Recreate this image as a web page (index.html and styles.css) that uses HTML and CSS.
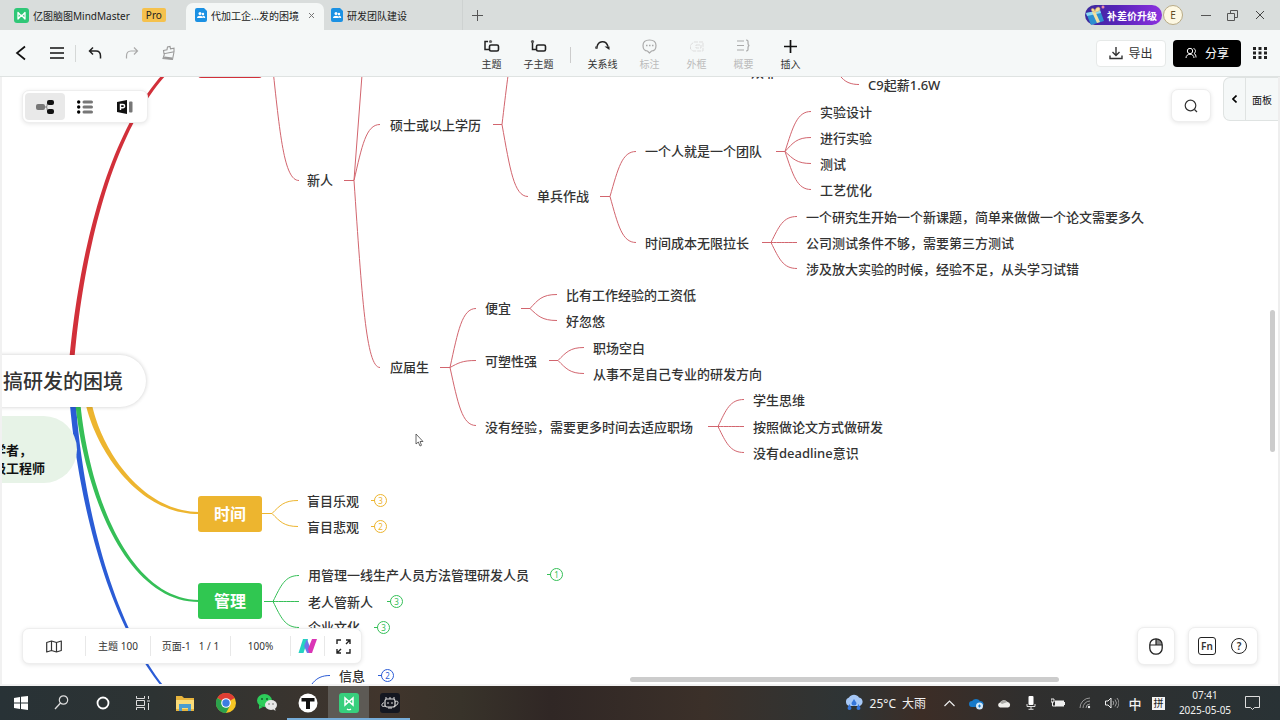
FILE: index.html
```html
<!DOCTYPE html>
<html lang="zh-CN">
<head>
    <meta charset="UTF-8">
    <meta name="viewport" content="width=device-width, initial-scale=1.0">
    <title>亿图脑图MindMaster</title>
    <link rel="stylesheet" href="styles.css">
</head>
<body>
    <header class="tabbar">
        <div class="brand">
            <svg width="15" height="15" viewBox="0 0 15 15"><rect width="15" height="15" rx="3" fill="#2fc777"/><path d="M4 11V4.5l3.5 3.7L11 4.500V11L7.500 7.300z" fill="none" stroke="#fff" stroke-width="1.300" stroke-linejoin="round"/></svg>
            <span>亿图脑图MindMaster</span>
            <span class="pro">Pro</span>
        </div>
        <div class="tab active">
            <svg width="12" height="14" viewBox="0 0 12 14"><path d="M2 0h7l3 3v9a2 2 0 0 1-2 2H2a2 2 0 0 1-2-2V2a2 2 0 0 1 2-2z" fill="#1b91e3"/><circle cx="5" cy="5.500" r="1.500" fill="#fff"/><circle cx="8" cy="6" r="1.200" fill="#fff"/><path d="M2 10c0-3 6-3 6 0zM7.500 8c1.500-.5 2.700.5 2.700 2H8.500z" fill="#fff"/></svg>
            <span>代加工企...发的困境</span>
            <button class="close" aria-label="关闭标签"><svg width="7" height="7" viewBox="0 0 7 7"><path d="M1 1l5 5M6 1L1 6" stroke="#777" stroke-width="1"/></svg></button>
        </div>
        <div class="tab">
            <svg width="12" height="14" viewBox="0 0 12 14"><path d="M2 0h7l3 3v9a2 2 0 0 1-2 2H2a2 2 0 0 1-2-2V2a2 2 0 0 1 2-2z" fill="#1b91e3"/><circle cx="5" cy="5.500" r="1.500" fill="#fff"/><circle cx="8" cy="6" r="1.200" fill="#fff"/><path d="M2 10c0-3 6-3 6 0zM7.500 8c1.500-.5 2.700.5 2.700 2H8.500z" fill="#fff"/></svg>
            <span>研发团队建设</span>
        </div>
        <button class="new-tab" aria-label="新建"><svg width="11" height="11" viewBox="0 0 11 11"><path d="M5.500 0v11M0 5.500h11" stroke="#555"/></svg></button>
        <div class="window-side">
            <button class="upgrade">
                <svg width="22" height="20" viewBox="0 0 22 20"><path d="M1 8L15 5l4 11-13 4z" fill="#2e8fd0"/><path d="M1 8l14-3 1 3L2 11z" fill="#8ed8f2"/><path d="M7 7l5 11 3-1-5-11z" fill="#f2dfa3"/><path d="M9 7C5 6 6 2 9 4l1 2c0-4 5-5 5-2 0 2-3 3-6 3z" fill="#f6dd9b" stroke="#d3a85d" stroke-width=".5"/><circle cx="18" cy="2" r="1.500" fill="#e98aa7"/></svg>
                <span>补差价升级</span>
            </button>
            <button class="avatar">E</button>
            <button class="win-btn" aria-label="最小化"><svg width="10" height="10" viewBox="0 0 10 10"><path d="M0 5.500h10" stroke="#555"/></svg></button>
            <button class="win-btn" aria-label="还原"><svg width="11" height="11" viewBox="0 0 11 11"><path d="M.5 3.500h7v7h-7zM3.500 3V.500h7v7H8" fill="none" stroke="#555"/></svg></button>
            <button class="win-btn" aria-label="关闭"><svg width="10" height="10" viewBox="0 0 10 10"><path d="M1 1l8 8M9 1L1 9" stroke="#444"/></svg></button>
        </div>
    </header>

    <nav class="toolbar">
        <div class="tools-left">
            <button class="icon-btn" aria-label="返回"><svg width="12" height="16" viewBox="0 0 12 16"><path d="M10 1.500L2 8l8 6.500" fill="none" stroke="#111" stroke-width="1.700"/></svg></button>
            <button class="icon-btn menu-btn" aria-label="菜单"><svg width="14" height="14" viewBox="0 0 14 14"><path d="M0 2h14M0 7h14M0 12h14" stroke="#111" stroke-width="1.600"/></svg></button>
            <button class="icon-btn" aria-label="撤销"><svg width="14" height="14" viewBox="0 0 14 14"><path d="M5 1.500L1.500 5 5 8.500M2 5h6c3 0 4.500 2 4.500 5v2.500" fill="none" stroke="#222" stroke-width="1.500"/></svg></button>
            <button class="icon-btn" aria-label="重做" disabled><svg width="14" height="14" viewBox="0 0 14 14"><path d="M9 1.500L12.500 5 9 8.500M12 5H6c-3 0-4.500 2-4.500 5v2.500" fill="none" stroke="#aaa" stroke-width="1.200"/></svg></button>
            <button class="icon-btn" aria-label="格式刷" disabled><svg width="15" height="16" viewBox="0 0 15 16"><path d="M2.500 5.500l3.500-.8L6.500 2l2.500-.6.500 2.500 3.500-.7v3.500L3 8.700zM3.500 9L2 13.500l9.500 1L13 7" fill="none" stroke="#999" stroke-width="1.100"/><path d="M3.500 11.500l8 1-.5 2-8.500-1z" fill="#999"/></svg></button>
        </div>
        <div class="tools-center">
            <button class="tool"><svg width="17" height="16" viewBox="0 0 17 16"><path d="M5 3.500H2v8h4" fill="none" stroke="#222" stroke-width="1.500"/><rect x="6.500" y="7" width="9" height="6" rx="1.500" fill="none" stroke="#222" stroke-width="1.600"/><circle cx="7.500" cy="3.500" r="1.600" fill="#666"/></svg>主题</button>
            <button class="tool"><svg width="17" height="16" viewBox="0 0 17 16"><path d="M2.500 4v7.500H6" fill="none" stroke="#222" stroke-width="1.500"/><rect x="6.500" y="7" width="9" height="6" rx="1.500" fill="none" stroke="#222" stroke-width="1.600"/><circle cx="2.500" cy="3.500" r="1.600" fill="#555"/></svg>子主题</button>
            <span class="separator"></span>
            <button class="tool"><svg width="17" height="16" viewBox="0 0 17 16"><path d="M3 9C4 2.500 12 1.500 14 8.500" fill="none" stroke="#222" stroke-width="1.500"/><path d="M10.500 8.500h5V12z" fill="#222"/><circle cx="2.500" cy="9.500" r="1.500" fill="#555"/></svg>关系线</button>
            <button class="tool" disabled><svg width="17" height="16" viewBox="0 0 17 16"><path d="M8.500 15l-2-2C3.500 13 2 10.500 2 7.500 2 4 4.500 2 8.500 2S15 4 15 7.500c0 3-1.500 5.500-4.500 5.500z" fill="none" stroke="#aaa" stroke-width="1.200"/><path d="M5 7.500h1.500M8 7.500h1.500M11 7.500h1.500" stroke="#aaa" stroke-width="1.300"/></svg>标注</button>
            <button class="tool" disabled><svg width="17" height="16" viewBox="0 0 17 16"><path d="M15 4H6L2.500 7v4L5 13h10zM8 7h5v3H8z" fill="none" stroke="#ddd" stroke-dasharray="4 1"/></svg>外框</button>
            <button class="tool" disabled><svg width="17" height="16" viewBox="0 0 17 16"><path d="M2 3h7M2 7.500h7M2 12h7M11 2c2.500 0 2 1.500 2 3s.5 2.500 1.500 2.500C13.500 7.500 13 8.500 13 10s.5 3-2 3" fill="none" stroke="#aaa" stroke-width="1.200"/></svg>概要</button>
            <button class="tool"><svg width="17" height="16" viewBox="0 0 17 16"><path d="M8.500 2v13M2 8.500h13" stroke="#111" stroke-width="1.700"/></svg>插入</button>
        </div>
        <div class="tools-right">
            <button class="export"><svg width="14" height="14" viewBox="0 0 14 14"><path d="M7 1v8M3.500 6L7 9.500 10.500 6M1 9.500v3h12v-3" fill="none" stroke="#333" stroke-width="1.400"/></svg>导出</button>
            <button class="share"><svg width="12" height="12" viewBox="0 0 12 12"><circle cx="5" cy="4" r="2.700" fill="none" stroke="#fff"/><path d="M1 11c0-5 8-5 8 0M8.500 1.500c2.500.5 2.500 4 .5 5 1.500.5 2 2 2 4" fill="none" stroke="#fff"/></svg>分享</button>
            <button class="icon-btn" aria-label="应用"><svg width="14" height="12" viewBox="0 0 14 12"><path d="M0 1.500h14M0 6h14M0 10.500h14" stroke="#222" stroke-width="3" stroke-dasharray="3 2.500"/></svg></button>
        </div>
    </nav>

    <main class="workspace">
        <div class="canvas" id="canvas">
            <svg class="links" id="links"></svg>
        </div>

        <div class="view-switch">
            <button class="view selected" aria-label="导图视图"><svg width="18" height="16" viewBox="0 0 18 16"><path d="M8 8h2c2 0 0-4.500 3-4.500M10 8c2 0 0 4.500 3 4.500" fill="none" stroke="#777"/><rect x="0" y="5" width="9" height="6" rx="2" fill="#777"/><rect x="11" y="1" width="7" height="5" rx="2" fill="#111"/><rect x="11" y="10" width="7" height="5" rx="2" fill="#111"/></svg></button>
            <button class="view" aria-label="大纲视图"><svg width="16" height="14" viewBox="0 0 16 14"><circle cx="1.700" cy="2" r="1.700"/><circle cx="1.700" cy="7" r="1.700"/><circle cx="1.700" cy="12" r="1.700"/><path d="M7 2h7.500M7 7h7.500M7 12h7.500" stroke="#777" stroke-width="3" stroke-linecap="round"/></svg></button>
            <button class="view" aria-label="幻灯片视图"><svg width="16" height="14" viewBox="0 0 16 14"><path d="M0 2l10-2v14L0 12z" fill="#111"/><path d="M3.500 10V4.500H6a1.500 1.500 0 0 1 0 3.200H3.500" fill="none" stroke="#fff" stroke-width="1.400"/><rect x="12" y="1.500" width="3.500" height="11" rx="1" fill="#777"/></svg></button>
        </div>

        <button class="search" aria-label="搜索"><svg width="14" height="14" viewBox="0 0 14 14"><circle cx="6.500" cy="6.500" r="5.300" fill="none" stroke="#333" stroke-width="1.200"/><path d="M10.500 10.500l2.500 2.500" stroke="#333" stroke-width="1.300"/></svg></button>
        <button class="side-panel"><span class="panel-arrow"><svg width="5" height="8" viewBox="0 0 5 8"><path d="M4.500.5L1 4l3.500 3.500" fill="none" stroke="#000" stroke-width="1.600"/></svg></span><span class="panel-label">面板</span></button>
        <div class="scroll-y"></div>
        <div class="scroll-x"></div>

        <div class="status">
            <button class="status-map" aria-label="导航"><svg width="16" height="13" viewBox="0 0 16 13"><path d="M.7 2.500L5.500 1l5 1.500L15.300 1v9.500L10.500 12l-5-1.500L.7 12zM5.500 1v9.500M10.500 2.500V12" fill="none" stroke="#333" stroke-width="1.200" stroke-linejoin="round"/></svg></button>
            <span class="status-topics">主题 100</span>
            <button class="status-page"><span>页面-1</span><span>1 / 1</span></button>
            <button class="status-zoom">100%</button>
            <button class="status-ai" aria-label="AI"><svg width="20" height="16" viewBox="0 0 20 16"><path d="M5 1h5L5.500 15h-5z" fill="#25d3c2"/><path d="M9 1l5 14H9L6 8z" fill="#6c78ea"/><path d="M14 1h5l-5 14h-3l-1-4z" fill="#da35b5"/></svg></button>
            <button class="status-full" aria-label="全屏"><svg width="15" height="15" viewBox="0 0 15 15"><path d="M1 5V1h4M10 1h4v4M14 10v4h-4M5 14H1v-4M10 5l3.500-3.500M5 10l-3.500 3.500" fill="none" stroke="#222" stroke-width="1.400"/></svg></button>
        </div>

        <div class="helpers">
            <div class="helper-box"><button aria-label="鼠标"><svg width="14" height="17" viewBox="0 0 14 17"><path d="M7 1h0a6 6 0 0 1 6 6H7z" fill="#888"/><rect x=".8" y=".8" width="12.400" height="15.400" rx="6" fill="none" stroke="#222" stroke-width="1.300"/><path d="M1 7h12M7 1v6" stroke="#222" stroke-width="1.200"/></svg></button></div>
            <div class="helper-box">
                <button class="fn"><span>Fn</span></button>
                <button aria-label="帮助"><span class="question">?</span></button>
            </div>
        </div>

        <svg class="cursor" width="9" height="14" viewBox="0 0 9 14"><path d="M1 1v10l2.300-2 1.700 4 1.500-.7L5 8.500h3z" fill="#fff" stroke="#444" stroke-width=".8"/></svg>
    </main>

    <footer class="taskbar">
        <div class="apps">
            <button aria-label="开始"><svg width="14" height="14" viewBox="0 0 14 14"><path d="M0 2l6-1v5.500H0zM7 .8L14 0v6.500H7zM0 7.500h6V13l-6-1zM7 7.500h7V14l-7-.9z" fill="#fff"/></svg></button>
            <button aria-label="搜索"><svg width="15" height="15" viewBox="0 0 15 15"><circle cx="9.500" cy="5" r="4.200" fill="none" stroke="#ddd" stroke-width="1.200"/><path d="M6.500 8L1 14" stroke="#ddd" stroke-width="1.300"/></svg></button>
            <button aria-label="Cortana"><svg width="14" height="14" viewBox="0 0 14 14"><circle cx="7" cy="7" r="5.500" fill="none" stroke="#fff" stroke-width="1.800"/></svg></button>
            <button aria-label="任务视图"><svg width="15" height="14" viewBox="0 0 15 14"><path d="M.5 0v2.500h8V0M.5 4.500h8v5h-8zM.5 14v-2.500h8V14M12.500 0v3M12.500 7v7M11 5h3" fill="none" stroke="#ddd"/></svg></button>
            <button aria-label="文件资源管理器"><svg width="20" height="16" viewBox="0 0 20 16"><path d="M1 1h6l2 2h10v13H1z" fill="#e8b53d"/><path d="M1 5h18v9H1z" fill="#fbdc79"/><path d="M4 9h12v7h-3v-3H7v3H4z" fill="#4c9dd0"/></svg></button>
            <button aria-label="Chrome"><svg width="20" height="20" viewBox="0 0 20 20"><circle cx="10" cy="10" r="10" fill="#f7c623"/><path d="M10 10L1.300 5A10 10 0 0 1 18.700 5z" fill="#df3e34"/><path d="M10 10L1.300 5A10 10 0 0 0 10 20l4-7.500z" fill="#2ba24c"/><circle cx="10" cy="10" r="4.800" fill="#fff"/><circle cx="10" cy="10" r="3.700" fill="#3c7de0"/></svg></button>
            <button aria-label="微信"><svg width="20" height="17" viewBox="0 0 20 17"><ellipse cx="7.500" cy="6.500" rx="7.500" ry="6.500" fill="#2dcd5a"/><path d="M2 11l0 4 4-2z" fill="#2dcd5a"/><ellipse cx="14" cy="11" rx="6" ry="5" fill="#e7e7e7"/><path d="M16 15l2.500 2-.5-3z" fill="#e7e7e7"/><circle cx="5" cy="5" r="1" fill="#165d2c"/><circle cx="10" cy="5" r="1" fill="#165d2c"/><circle cx="12" cy="10" r=".8" fill="#666"/><circle cx="16" cy="10" r=".8" fill="#666"/></svg></button>
            <button class="running" aria-label="Typora"><svg width="20" height="20" viewBox="0 0 20 20"><circle cx="10" cy="10" r="9.500" fill="#fff"/><path d="M3.500 5h13v3.500H12V16H8V8.500H3.500z" fill="#111"/></svg></button>
            <button class="running current" aria-label="MindMaster"><svg width="20" height="20" viewBox="0 0 20 20"><rect width="20" height="20" rx="3" fill="#37cf7d"/><path d="M6 12V5l4 3.500L14 5v7l-4-3.500z" fill="none" stroke="#fff" stroke-width="1.500"/><path d="M8 16q2 1.500 4 0" fill="none" stroke="#fff" stroke-width="1.200"/></svg></button>
            <button class="running" aria-label="录屏"><svg width="20" height="20" viewBox="0 0 20 20"><rect width="20" height="20" rx="3" fill="#141720"/><rect x="5" y="6" width="10" height="8" rx="2" fill="none" stroke="#ddd" stroke-width="1.200"/><path d="M6 6V4M10 6V4M14 6V4M5 13c-5 2-3-4-1-3M15 9c4-3 4 3 0 4M8 9v2M12 9v2M8 15h4" fill="none" stroke="#ddd"/></svg></button>
        </div>
        <div class="tray">
            <button class="weather"><svg width="20" height="18" viewBox="0 0 20 18"><path d="M5 12a4.500 4.500 0 0 1 0-8.500 6 6 0 0 1 10 0A4.500 4.500 0 0 1 16 12z" fill="#a6c8f7"/><path d="M10 5l2.500 4a2.500 2.500 0 1 1-5 0zM5.500 10l2 4a2 2 0 1 1-4 0zM14.500 10l2 4a2 2 0 1 1-4 0z" fill="#3576dc"/></svg><span>25°C</span><span>大雨</span></button>
            <button aria-label="更多"><svg width="11" height="7" viewBox="0 0 11 7"><path d="M.5 6l5-5 5 5" fill="none" stroke="#eee" stroke-width="1.200"/></svg></button>
            <button aria-label="OneDrive"><svg width="15" height="13" viewBox="0 0 15 13"><path d="M3 10a3 3 0 0 1 0-6 5 5 0 0 1 8 0 3 3 0 0 1 1 6z" fill="#1679c9"/><circle cx="10.500" cy="9" r="3.500" fill="#d4e9fa"/><path d="M9 9h3M10.500 7.500v3" stroke="#1679c9"/></svg></button>
            <button aria-label="云"><svg width="14" height="10" viewBox="0 0 14 10"><path d="M3 9.500a2.600 2.600 0 0 1 0-5A4.500 4.500 0 0 1 10.500 4a2.800 2.800 0 0 1 .5 5.500z" fill="#efeeea"/><path d="M3 4.500A4.500 4.500 0 0 1 10.500 4L5 6z" fill="#aaa9a5"/></svg></button>
            <button aria-label="麦克风"><svg width="10" height="14" viewBox="0 0 10 14"><rect x="2.500" width="5" height="9" rx="1" fill="#fff"/><path d="M1 8v2.500h8V8M5 10v3M2.500 13.300h5" fill="none" stroke="#ddd"/></svg></button>
            <button aria-label="电池"><svg width="14" height="10" viewBox="0 0 14 10"><path d="M0 1h3v3H0zM1.500 4v4h3" fill="none" stroke="#eee"/><rect x="4" y="2.500" width="9" height="6" fill="#eee"/><path d="M13.500 4v3" stroke="#eee"/></svg></button>
            <button aria-label="网络"><svg width="12" height="12" viewBox="0 0 12 12"><path d="M1 11A10 10 0 0 1 11 1M4 11a7 7 0 0 1 7-7M7 11a4 4 0 0 1 4-4" fill="none" stroke="#999"/><circle cx="10" cy="10" r="1.200" fill="#eee"/></svg></button>
            <button aria-label="音量"><svg width="14" height="12" viewBox="0 0 14 12"><path d="M.5 4h2.500L6 1v10L3 8H.5z" fill="none" stroke="#eee"/><path d="M8 4q1.500 2 0 4M10 2.500q3 3.500 0 7M12 1q4 5 0 10" fill="none" stroke="#999"/></svg></button>
            <button class="ime">中</button>
            <button class="ime-mode"><span>拼</span></button>
            <button class="clock"><span>07:41</span><span>2025-05-05</span></button>
            <button class="notice" aria-label="通知"><svg width="15" height="14" viewBox="0 0 15 14"><path d="M.5.500h14v11h-5l-2 2-2-2h-5z" fill="none" stroke="#ddd"/></svg></button>
        </div>
    </footer>

    <script src="map.js"></script>
</body>
</html>
```
FILE: styles.css
```css
* {
    box-sizing: border-box;
}
body {
    margin: 0;
    min-height: 100vh;
    display: flex;
    flex-direction: column;
    font-family: "Noto Sans", "Noto Sans CJK SC", sans-serif;
    font-size: 10px;
    color: #333;
    background: #fff;
}
button {
    display: flex;
    align-items: center;
    justify-content: center;
    padding: 0;
    border: none;
    background: none;
    color: inherit;
    font: inherit;
    white-space: nowrap;
}
svg {
    flex: none;
}

/* tabs */
.tabbar {
    display: flex;
    height: 30px;
    background: #d9dddc;
}
.brand {
    display: flex;
    align-items: center;
    gap: 4px;
    width: 186px;
    padding-left: 14px;
    color: #222;
}
.pro {
    margin-left: 8px;
    padding: 0 4px;
    border-radius: 2px;
    background: #f5c14d;
    line-height: 14px;
}
.tab {
    display: flex;
    align-items: center;
    gap: 4px;
    width: 138px;
    padding-left: 7px;
    color: #222;
}
.tab.active {
    margin-top: 3px;
    padding-bottom: 3px;
    padding-left: 9px;
    border-radius: 7px 7px 0 0;
    background: #f4f7f6;
}
.close {
    width: 16px;
    height: 16px;
}
.new-tab {
    width: 30px;
    border-left: 1px solid #ced2d1;
}
.window-side {
    display: flex;
    align-items: center;
    margin-left: auto;
    padding-right: 7px;
}
.upgrade {
    height: 20px;
    margin-right: 1px;
    padding-right: 5px;
    border-radius: 10px;
    background: linear-gradient(90deg, #3c2a9c, #5423b6 40%, #8c31df);
    color: #fff;
    font-weight: 700;
}
.avatar {
    width: 20px;
    height: 20px;
    margin-right: 9px;
    border: 1px solid #b9ab86;
    border-radius: 50%;
    background: #fdf8e3;
    color: #5f4b22;
}
.win-btn {
    width: 27px;
    height: 30px;
}

/* toolbar */
.toolbar {
    display: flex;
    align-items: center;
    height: 47px;
    border-bottom: 1px solid #dfe3e2;
    background: #f5f8f8;
}
.tools-left,
.tools-right {
    display: flex;
    flex: 1 0 0;
    align-items: center;
    gap: 7px;
}
.tools-left {
    gap: 0;
    padding-left: 2px;
}
.tools-right {
    justify-content: flex-end;
    padding-right: 2px;
}
.icon-btn {
    width: 37px;
    height: 17px;
}
.tools-right .icon-btn {
    margin-left: -7px;
}
.menu-btn {
    border-right: 1px solid #d5d8d7;
}
.tools-center {
    display: flex;
    align-items: center;
    margin-top: 4px;
    margin-left: 2px;
}
.tool {
    flex-direction: column;
    width: 47px;
    gap: 2px;
    line-height: 16px;
}
.tool:disabled {
    color: #bbb;
}
.separator {
    width: 1px;
    height: 16px;
    margin: 0 8px;
    background: #ccc;
}
.export,
.share {
    height: 27px;
    border-radius: 4px;
    font-size: 12px;
}
.export {
    width: 70px;
    gap: 5px;
    border: 1px solid #e6e9e8;
    background: #fff;
}
.share {
    width: 68px;
    gap: 8px;
    background: #000;
    color: #fff;
}

/* mind map */
.workspace {
    position: relative;
    flex: 1;
    border-left: 2px solid #f1f1f1;
    border-right: 2px solid #eee;
    border-bottom: 2px solid #f3f3f3;
}
.canvas {
    position: absolute;
    inset: 0;
    overflow: hidden;
}
.links {
    position: absolute;
    width: 100%;
    height: 100%;
}
.topic {
    position: absolute;
    font-size: 13px;
    font-weight: 500;
    line-height: 20px;
    white-space: nowrap;
    color: #333;
}
.box {
    position: absolute;
    height: 36px;
    padding: 0 16px;
    border-radius: 3px;
    color: #fff;
    font-size: 16px;
    font-weight: 700;
    line-height: 36px;
}
.box:empty {
    width: 64px;
}
.root {
    position: absolute;
    top: 278px;
    left: -60px;
    width: 204px;
    height: 52px;
    padding-right: 23px;
    border-radius: 26px;
    background: #fff;
    box-shadow: 0 0 4px rgba(0,0,0,0.2);
    font-size: 20px;
    font-weight: 500;
    line-height: 54px;
    text-align: right;
}
.callout {
    position: absolute;
    top: 339px;
    left: -80px;
    width: 155px;
    height: 67px;
    padding: 25px 32px 0 0;
    border-radius: 34px;
    background: #e7f3e7;
    color: #111;
    font-size: 13px;
    font-weight: 700;
    line-height: 18px;
}
.callout div {
    padding-left: 71px;
    white-space: nowrap;
}
.count {
    position: absolute;
    width: 13px;
    height: 13px;
    border: 1px solid;
    border-radius: 50%;
    font-size: 8px;
    line-height: 11px;
    text-align: center;
}
.cursor {
    position: absolute;
    top: 356px;
    left: 413px;
}

/* floating panels */
.view-switch,
.search,
.status,
.helper-box {
    border: 1px solid #eee;
    border-radius: 7px;
    background: #fff;
    box-shadow: 0 1px 4px rgba(0,0,0,0.1);
}
.view-switch {
    position: absolute;
    top: 13px;
    left: 20px;
    display: flex;
    padding: 2px;
}
.view {
    width: 40px;
    height: 27px;
    border-radius: 4px;
}
.view.selected {
    background: #e9e9e9;
}
.search {
    position: absolute;
    top: 12px;
    right: 67px;
    width: 40px;
    height: 33px;
}
.side-panel {
    position: absolute;
    top: 0;
    right: 0;
    height: 44px;
    border: 1px solid #dfe3e2;
    border-right: none;
    border-radius: 7px 0 0 7px;
    background: #f5f8f8;
    color: #111;
}
.panel-arrow {
    padding: 0 8px;
    border-right: 1px solid #dfe3e2;
    line-height: 42px;
}
.panel-label {
    padding: 0 6px;
}
.scroll-y {
    position: absolute;
    top: 233px;
    right: 3px;
    width: 5px;
    height: 142px;
    border-radius: 3px;
    background: #ccc;
}
.scroll-x {
    position: absolute;
    bottom: 2px;
    left: 628px;
    width: 429px;
    height: 5px;
    border-radius: 3px;
    background: #ccc;
}
.status {
    position: absolute;
    bottom: 20px;
    left: 20px;
    display: flex;
    align-items: center;
    height: 36px;
}
.status > * {
    height: 20px;
    border-right: 1px solid #e8e8e8;
    line-height: 20px;
    text-align: center;
}
.status > :last-child {
    border: none;
}
.status-map {
    width: 63px;
}
.status-topics {
    width: 65px;
}
.status-page {
    width: 80px;
    gap: 8px;
}
.status-zoom {
    width: 60px;
}
.status-ai {
    width: 34px;
}
.status-full {
    width: 36px;
}
.helpers {
    position: absolute;
    right: 20px;
    bottom: 19px;
    display: flex;
    gap: 13px;
}
.helper-box {
    display: flex;
    padding: 0 2px;
}
.helper-box button {
    width: 32px;
    height: 36px;
}
.fn span,
.question {
    width: 18px;
    border: 1px solid #222;
    border-radius: 3px;
    font-weight: 600;
    line-height: 16px;
}
.question {
    width: 16px;
    border-radius: 50%;
    line-height: 14px;
}

/* windows taskbar */
.taskbar {
    display: flex;
    justify-content: space-between;
    height: 34px;
    background: linear-gradient(90deg, #283236, #2d3333 12%, #41352c 30%, #38332a 36%, #302725 43%, #3b3029 55%, #2e3435 66%, #3c2d26 72%, #302f2e 80%, #293235);
    color: #f1f1f1;
}
.apps,
.tray {
    display: flex;
}
.apps button {
    width: 41px;
    padding-top: 1px;
    border-bottom: 2px solid transparent;
}
.apps .running {
    border-color: #76add9;
}
.apps .current {
    background-color: #5d5a55;
}
.tray button {
    width: 27px;
}
.tray .weather {
    width: auto;
    gap: 6px;
    margin-right: 10px;
    font-size: 12px;
}
.tray .ime {
    width: 20px;
    font-size: 13px;
    font-weight: 500;
}
.ime-mode span {
    width: 13px;
    background: #f5f5f5;
    color: #222;
    line-height: 13px;
}
.tray .clock {
    flex-direction: column;
    width: 66px;
    line-height: 15px;
}
.tray .notice {
    width: 28px;
    margin-right: 14px;
}
```
FILE: map.js
```javascript
const RED = '#d2656e';
const YELLOW = '#edb52f';
const GREEN = '#35bf57';
const BLUE = '#2b5cd6';

const canvas = document.getElementById('canvas');
const links = document.getElementById('links');

// x is the left edge of the text, y its middle
const topics = [
    ['双非10851', 749, -4],
    ['C9起薪1.6W', 866, 9],
    ['硕士或以上学历', 388, 49],
    ['新人', 305, 104],
    ['单兵作战', 535, 120],
    ['一个人就是一个团队', 643, 75],
    ['实验设计', 818, 36],
    ['进行实验', 818, 62],
    ['测试', 818, 88],
    ['工艺优化', 818, 114],
    ['时间成本无限拉长', 643, 167],
    ['一个研究生开始一个新课题，简单来做做一个论文需要多久', 804, 141],
    ['公司测试条件不够，需要第三方测试', 804, 167],
    ['涉及放大实验的时候，经验不足，从头学习试错', 804, 193],
    ['应届生', 388, 291],
    ['便宜', 483, 232],
    ['比有工作经验的工资低', 564, 219],
    ['好忽悠', 564, 245],
    ['可塑性强', 483, 285],
    ['职场空白', 591, 272],
    ['从事不是自己专业的研发方向', 591, 298],
    ['没有经验，需要更多时间去适应职场', 483, 351],
    ['学生思维', 751, 324],
    ['按照做论文方式做研发', 751, 351],
    ['没有deadline意识', 751, 377],
    ['盲目乐观', 305, 425],
    ['盲目悲观', 305, 451],
    ['用管理一线生产人员方法管理研发人员', 306, 499],
    ['老人管新人', 306, 526],
    ['企业文化', 306, 551],
    ['信息', 337, 600]
];

// start of the stub, branching point, y of the parent, then the ends of the children
const forks = [
    { color: RED, x: 260, fork: 270, y: -17, end: 297, ys: [103] },
    { color: RED, x: 342, fork: 352, y: 103, end: 378, ys: [47, 290] },
    { color: RED, x: 491, fork: 500, y: 47, end: 526, ys: [-60, 119] },
    { color: RED, x: 598, fork: 608, y: 119, end: 634, ys: [74, 165] },
    { color: RED, x: 774, fork: 783, y: 74, end: 809, ys: [34, 60, 86, 112] },
    { color: RED, x: 760, fork: 769, y: 165, end: 795, ys: [139, 165, 191] },
    { color: RED, x: 820, fork: 829, y: -17, end: 857, ys: [7] },
    { color: RED, x: 438, fork: 448, y: 290, end: 474, ys: [231, 283, 348] },
    { color: RED, x: 519, fork: 528, y: 231, end: 555, ys: [217, 243] },
    { color: RED, x: 547, fork: 556, y: 283, end: 582, ys: [270, 296] },
    { color: RED, x: 706, fork: 716, y: 349, end: 742, ys: [322, 349, 375] },
    { color: YELLOW, x: 260, fork: 270, y: 436, end: 296, ys: [423, 449] },
    { color: GREEN, x: 262, fork: 271, y: 524, end: 297, ys: [498, 524, 550] },
    { color: BLUE, x: 290, fork: 300, y: 625, end: 328, ys: [598] }
];

const counts = [
    [3, 378, 423, YELLOW],
    [2, 378, 449, YELLOW],
    [1, 554, 497, GREEN],
    [3, 394, 524, GREEN],
    [3, 381, 550, GREEN],
    [2, 385, 598, BLUE]
];

function addDiv(className, text, left, top) {
    const div = document.createElement('div');
    div.className = className;
    div.textContent = text;
    if (left !== undefined) {
        div.style.left = left + 'px';
        div.style.top = top + 'px';
    }
    canvas.appendChild(div);
    return div;
}

function addPath(d, stroke, fill) {
    const path = document.createElementNS('http://www.w3.org/2000/svg', 'path');
    path.setAttribute('d', d);
    path.setAttribute('stroke', stroke);
    path.setAttribute('fill', fill);
    links.appendChild(path);
}

// main branch: bezier that gets thinner towards its topic
function addTaper(p, w0, w1, color) {
    const left = [];
    const right = [];
    for (let i = 0; i <= 40; i++) {
        const t = i / 40;
        const u = 1 - t;
        const at = k => u*u*u*p[k] + 3*u*u*t*p[k+2] + 3*u*t*t*p[k+4] + t*t*t*p[k+6];
        const slope = k => u*u*(p[k+2]-p[k]) + 2*u*t*(p[k+4]-p[k+2]) + t*t*(p[k+6]-p[k+4]);
        const dx = slope(0);
        const dy = slope(1);
        const w = (w0 + (w1 - w0) * t) / 2 / Math.hypot(dx, dy);
        left.push([at(0) - dy * w, at(1) + dx * w]);
        right.unshift([at(0) + dy * w, at(1) - dx * w]);
    }
    addPath('M' + left.concat(right).join('L') + 'Z', 'none', color);
}

addTaper([70, 280, 80, 173, 108, 58, 162, -2], 5, 3, '#d2303a');
addTaper([71, 328, 76, 393, 98, 533, 162, 611], 6, 2, BLUE);
addTaper([76, 328, 86, 423, 128, 524, 197, 524], 5, 2, GREEN);
addTaper([87, 328, 97, 373, 138, 436, 197, 436], 6, 2, YELLOW);

forks.forEach(f => {
    f.ys.forEach(y => {
        const dy = y - f.y;
        const c1 = [f.fork + 8, f.y + dy * 0.62];
        const c2 = [f.fork + 12, y];
        addPath(`M${f.x} ${f.y + 0.5}H${f.fork}C${c1[0]} ${c1[1] + 0.5} ${c2[0]} ${c2[1] + 0.5} ${f.end} ${y + 0.5}`, f.color, 'none');
    });
});
// runs up to a topic above the visible area
addPath('M352 103L360 -2', RED, 'none');

topics.forEach(t => addDiv('topic', t[0], t[1], t[2] - 11));

addDiv('box', '', 196, -35).style.background = '#d2303a';
addDiv('box', '时间', 196, 419).style.background = YELLOW;
addDiv('box', '管理', 196, 506).style.background = '#30c751';

counts.forEach(c => {
    addPath(`M${c[1] - 9} ${c[2] + 0.5}h4`, c[3], 'none');
    addDiv('count', c[0], c[1] - 6, c[2] - 6).style.color = c[3];
});

const callout = addDiv('callout', '');
['学者，', '级工程师'].forEach(line => {
    const div = document.createElement('div');
    div.textContent = line;
    callout.appendChild(div);
});
addDiv('root', '搞研发的困境');
```
